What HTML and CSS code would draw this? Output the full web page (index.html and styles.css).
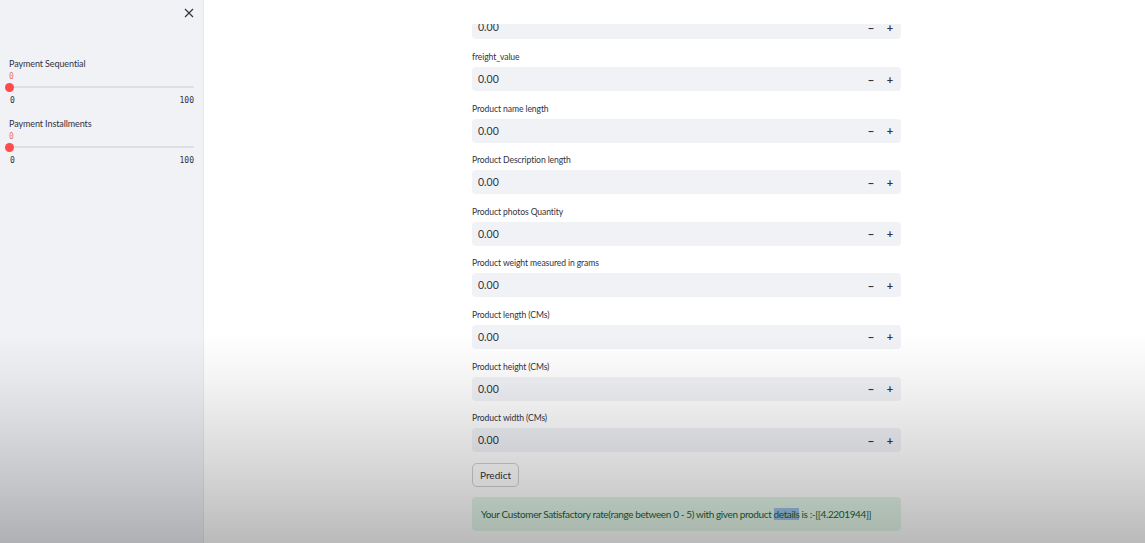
FILE: index.html
```html
<!DOCTYPE html>
<html>
<head>
<meta charset="utf-8">
<link rel="stylesheet" href="styles.css">
</head>
<body>
<div class="app">
  <aside class="sidebar">
    <div class="side-top">
      <svg class="close" width="10" height="10" viewBox="0 0 10 10"><path d="M1 1 L9 9 M9 1 L1 9" stroke="#31333f" stroke-width="1.2" fill="none"/></svg>
    </div>
    <div class="slider">
      <div class="s-label">Payment Sequential</div>
      <div class="s-value">0</div>
      <div class="s-track"><span class="s-thumb"></span></div>
      <div class="s-ticks"><span>0</span><span>100</span></div>
    </div>
    <div class="slider">
      <div class="s-label">Payment Installments</div>
      <div class="s-value">0</div>
      <div class="s-track"><span class="s-thumb"></span></div>
      <div class="s-ticks"><span>0</span><span>100</span></div>
    </div>
  </aside>
  <main class="main">
    <div class="content">
      <div class="field"><label>payment_value</label><div class="num"><span>0.00</span><span class="steps"><i>−</i><i>+</i></span></div></div>
      <div class="field"><label>freight_value</label><div class="num"><span>0.00</span><span class="steps"><i>−</i><i>+</i></span></div></div>
      <div class="field"><label>Product name length</label><div class="num"><span>0.00</span><span class="steps"><i>−</i><i>+</i></span></div></div>
      <div class="field"><label>Product Description length</label><div class="num"><span>0.00</span><span class="steps"><i>−</i><i>+</i></span></div></div>
      <div class="field"><label>Product photos Quantity</label><div class="num"><span>0.00</span><span class="steps"><i>−</i><i>+</i></span></div></div>
      <div class="field"><label>Product weight measured in grams</label><div class="num"><span>0.00</span><span class="steps"><i>−</i><i>+</i></span></div></div>
      <div class="field"><label>Product length (CMs)</label><div class="num"><span>0.00</span><span class="steps"><i>−</i><i>+</i></span></div></div>
      <div class="field"><label>Product height (CMs)</label><div class="num"><span>0.00</span><span class="steps"><i>−</i><i>+</i></span></div></div>
      <div class="field"><label>Product width (CMs)</label><div class="num"><span>0.00</span><span class="steps"><i>−</i><i>+</i></span></div></div>
      <button class="btn">Predict</button>
      <div class="success"><p>Your Customer Satisfactory rate(range between 0 - 5) with given product <span class="sel">details</span> is :-[[4.2201944]]</p></div>
    </div>
    <div class="header"></div>
  </main>
  <div class="shade"></div>
</div>
</body>
</html>
```

FILE: styles.css
```css
* { box-sizing: border-box; }
html, body { margin: 0; padding: 0; }
body {
  width: 1145px;
  height: 543px;
  overflow: hidden;
  font-family: "Lato", "Open Sans", sans-serif;
  color: #31333f;
  background: #ffffff;
}
.app {
  position: relative;
  display: flex;
  width: 1145px;
  height: 543px;
  overflow: hidden;
}
.sidebar {
  width: 204px;
  flex: none;
  background: #f0f2f6;
  border-right: 1px solid #e6e8ec;
  padding: 0 9px;
  display: flex;
  flex-direction: column;
}
.side-top {
  height: 57px;
  display: flex;
  justify-content: flex-end;
  padding-top: 8px;
  padding-right: 0;
}
.close { display: block; }
.slider { display: flex; flex-direction: column; height: 60px; }
.s-label { font-size: 9px; line-height: 14px; letter-spacing: -0.1px; }
.s-value {
  font-family: "DejaVu Sans Mono", monospace;
  font-size: 8px;
  line-height: 11px;
  color: #f0706e;
}
.s-track {
  position: relative;
  height: 2px;
  margin: 4px 0 0 0;
  background: #dcdee3;
  border-radius: 1px;
}
.s-thumb {
  position: absolute;
  left: -4px;
  top: -3.5px;
  width: 9px;
  height: 9px;
  border-radius: 50%;
  background: #ff4b4b;
}
.s-ticks {
  display: flex;
  justify-content: space-between;
  font-family: "DejaVu Sans Mono", monospace;
  font-size: 8px;
  line-height: 10px;
  margin-top: 8px;
  padding-left: 1px;
}
.main {
  position: relative;
  flex: 1;
  display: flex;
  justify-content: flex-start;
  padding-left: 268px;
}
.content {
  width: 429px;
  display: flex;
  flex-direction: column;
  gap: 10.6px;
  margin-top: -1.6px;
}
.field { display: flex; flex-direction: column; }
.field label {
  font-size: 8.6px;
  line-height: 14px;
  letter-spacing: -0.1px;
  margin-bottom: 3px;
}
.num {
  height: 24px;
  background: #f0f2f6;
  border-radius: 4px;
  display: flex;
  align-items: center;
  justify-content: space-between;
  padding: 0 7px 0 6px;
  font-size: 10.5px;
}
.steps { display: flex; gap: 11px; }
.steps i { font-style: normal; font-weight: 700; font-size: 11px; width: 8px; text-align: center; }
.btn {
  align-self: flex-start;
  height: 24px;
  padding: 0 7px;
  font-family: inherit;
  font-size: 10px;
  font-weight: 400;
  color: #31333f;
  background: #ffffff;
  border: 1px solid #cfd1d6;
  border-radius: 5px;
}
.success {
  height: 34px;
  background: #e3f6e9;
  color: #1f5e36;
  border-radius: 4px;
  display: flex;
  align-items: center;
  padding-left: 9px;
}
.success p {
  margin: 0;
  font-size: 10px;
  letter-spacing: -0.38px;
  white-space: nowrap;
}
.sel { background: #9cc3e6; }
.header {
  position: absolute;
  left: 0; top: 0; right: 0;
  height: 24px;
  background: #ffffff;
}
.shade {
  position: absolute;
  left: 0; right: 0; bottom: 0;
  height: 210px;
  pointer-events: none;
  background: linear-gradient(to bottom, rgba(0,0,0,0) 0%, rgba(0,0,0,0.05) 25%, rgba(0,0,0,0.16) 65%, rgba(0,0,0,0.27) 100%);
}
```
